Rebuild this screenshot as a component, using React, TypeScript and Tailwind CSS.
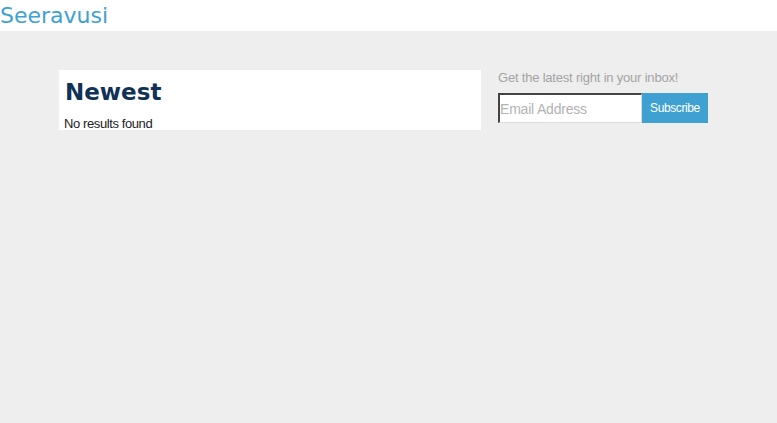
export default function App() {
  return (
    <div className="min-h-[423px] bg-[#eeeeee]">
      <header className="h-[31px] bg-white">
        <a className="block pt-[2px] text-[22px] leading-[28px] text-[#3ea1d3] [font-family:'DejaVu_Sans',sans-serif]">
          Seeravusi
        </a>
      </header>
      <div className="flex pl-[59px] pt-[39px]">
        <section className="h-[60px] w-[422px] overflow-hidden bg-white pl-[5px] pr-[6px] pt-[8px]">
          <h1 className="pl-[1px] text-[23px] leading-[28px] font-bold text-[#0f3256] [font-family:'DejaVu_Sans',sans-serif]">
            Newest
          </h1>
          <p className="mt-[10px] text-[13px] leading-[15px] tracking-[-0.4px] text-[#222] [font-family:'Liberation_Sans',sans-serif]">
            No results found
          </p>
        </section>
        <aside className="ml-[17px] [font-family:'Liberation_Sans',sans-serif]">
          <p className="text-[13px] leading-[15px] tracking-[-0.2px] text-[#a3a3a3]">
            Get the latest right in your inbox!
          </p>
          <form className="mt-[8px] flex">
            <input
              placeholder="Email Address"
              className="h-[30px] w-[144px] border-l-2 border-t-2 border-r border-b border-l-[#444] border-t-[#444] border-r-[#ddd] border-b-[#ddd] bg-white px-0 text-[14px] tracking-[-0.2px] outline-none placeholder:text-[#b3b3b3]"
            />
            <button
              type="button"
              className="h-[30px] w-[66px] bg-[#3fa1d2] text-[12px] tracking-[-0.4px] text-white"
            >
              Subscribe
            </button>
          </form>
        </aside>
      </div>
    </div>
  );
}
